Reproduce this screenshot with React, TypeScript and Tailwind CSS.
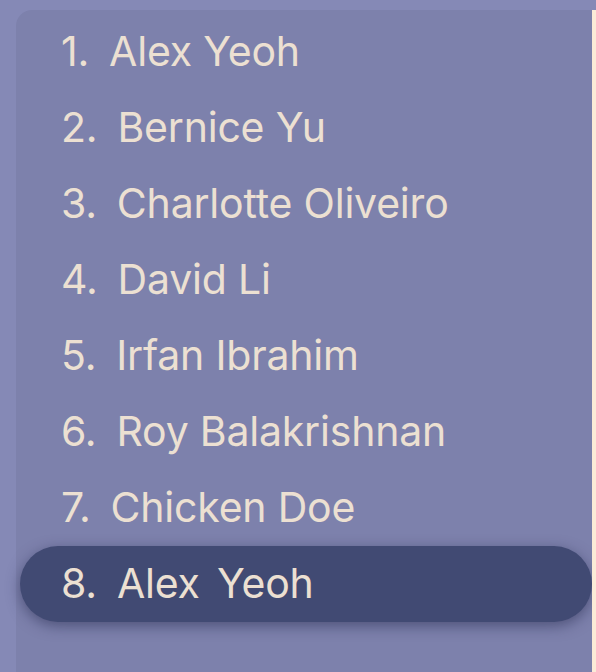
const names = [
  "Alex Yeoh",
  "Bernice Yu",
  "Charlotte Oliveiro",
  "David Li",
  "Irfan Ibrahim",
  "Roy Balakrishnan",
  "Chicken Doe",
  "Alex Yeoh",
];

export default function App() {
  const selected = 7;
  return (
    <div className="h-[672px] w-[596px] overflow-hidden bg-[#8589b6] pt-[10px] pl-4 flex font-['Inter',sans-serif]">
      <div className="h-full flex-1 rounded-tl-2xl bg-[#7d81ac] pt-1 pl-1">
        <ol className="flex flex-col">
          {names.map((name, i) => (
            <li
              key={i}
              className={
                "flex h-[76px] items-center pl-[41px] text-[41px] tracking-[-0.2px] text-[#ece0d2] " +
                (i === selected
                  ? "rounded-full bg-[#414a73] shadow-[0_4px_14px_rgba(40,44,80,0.55)] [word-spacing:6px]"
                  : "")
              }
            >
              <span>{i + 1}.</span>
              <span className="ml-[20px]">{name}</span>
            </li>
          ))}
        </ol>
      </div>
      <div className="h-full w-1 bg-[#fbebd7]" />
    </div>
  );
}
